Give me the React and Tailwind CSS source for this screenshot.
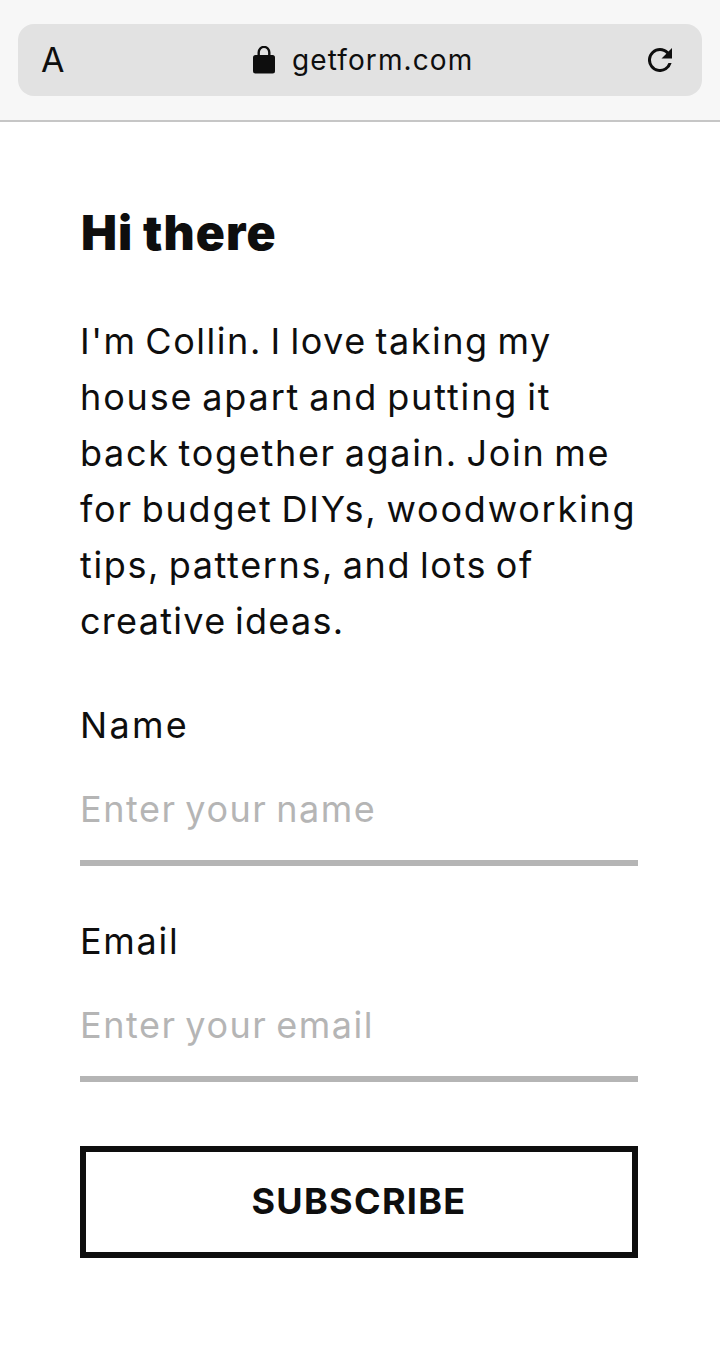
import React, { useState } from 'react';

const introLines = [
  { text: "I'm Collin. I love taking my", tracking: 'tracking-[1.55px]' },
  { text: 'house apart and putting it', tracking: 'tracking-[1.84px]' },
  { text: 'back together again. Join me', tracking: 'tracking-[1.7px]' },
  { text: 'for budget DIYs, woodworking', tracking: 'tracking-[1.79px]' },
  { text: 'tips, patterns, and lots of', tracking: 'tracking-[1.62px]' },
  { text: 'creative ideas.', tracking: 'tracking-[1.3px]' },
];

const LockIcon = () => (
  <svg width="22" height="28" viewBox="0 0 22 28" fill="currentColor">
    <rect x="0" y="9" width="22" height="18.5" rx="2.5" />
    <path d="M5.7 11V6.5a5.3 5.6 0 0 1 10.6 0V11" fill="none" stroke="currentColor" strokeWidth="2.4" />
  </svg>
);

const ReloadIcon = () => (
  <svg width="24" height="24" viewBox="4 4 16 16" fill="currentColor">
    <path d="M17.65 6.35A7.96 7.96 0 0 0 12 4a8 8 0 1 0 7.73 10h-2.08A6 6 0 1 1 12 6c1.66 0 3.14.69 4.22 1.78L13 11h7V4l-2.35 2.35z" />
  </svg>
);

const Field = ({ label, labelTracking, value, onChange, placeholder, type }) => (
  <label className="block">
    <span className={`block text-[36px] leading-[56px] ${labelTracking}`}>{label}</span>
    <input
      type={type}
      value={value}
      onChange={(e) => onChange(e.target.value)}
      placeholder={placeholder}
      className="mt-[17px] block h-24 w-full border-b-6 border-[#b5b5b5] pb-3 text-[36px] tracking-[1.55px] [word-spacing:-3px] outline-none placeholder:text-[#b5b5b5]"
    />
  </label>
);

const App = () => {
  const [name, setName] = useState('');
  const [email, setEmail] = useState('');

  return (
    <div className="h-[1360px] w-[720px] overflow-hidden bg-white text-[#0e0e0e] font-['Inter',sans-serif]">
      {/* Browser bar */}
      <header className="h-[122px] border-b-2 border-[#c6c6c6] bg-[#f7f7f7] px-[18px] pt-6">
        <div className="flex h-[72px] items-center rounded-2xl bg-[#e2e2e2] pr-[30px] pl-[23px]">
          <span className="w-[212px] text-[34px] leading-none">A</span>
          <LockIcon />
          <span className="ml-[17px] flex-1 text-[28px] tracking-[1.1px]">getform.com</span>
          <button type="button" aria-label="Reload">
            <ReloadIcon />
          </button>
        </div>
      </header>

      <main className="pt-[79px] pr-[82px] pl-20">
        <h1 className="pl-px text-[48px] leading-[64px] font-black tracking-[1.1px] [word-spacing:-1px]">Hi there</h1>
        <p className="mt-12 text-[36px] leading-[56px] [word-spacing:-3px]">
          {introLines.map((line) => (
            <span key={line.text} className={`block whitespace-nowrap ${line.tracking}`}>
              {line.text}{' '}
            </span>
          ))}
        </p>

        {/* Signup form */}
        <form className="mt-12" onSubmit={(e) => e.preventDefault()}>
          <Field label="Name" labelTracking="tracking-[2.3px]" type="text" value={name} onChange={setName} placeholder="Enter your name" />
          <div className="mt-[47px]">
            <Field label="Email" labelTracking="tracking-[1.7px]" type="email" value={email} onChange={setEmail} placeholder="Enter your email" />
          </div>
          <button
            type="submit"
            className="mt-16 h-28 w-full border-6 border-[#0e0e0e] pb-0.5 text-[36px] font-bold tracking-[1.3px]"
          >
            SUBSCRIBE
          </button>
        </form>
      </main>
    </div>
  );
};

export default App;
